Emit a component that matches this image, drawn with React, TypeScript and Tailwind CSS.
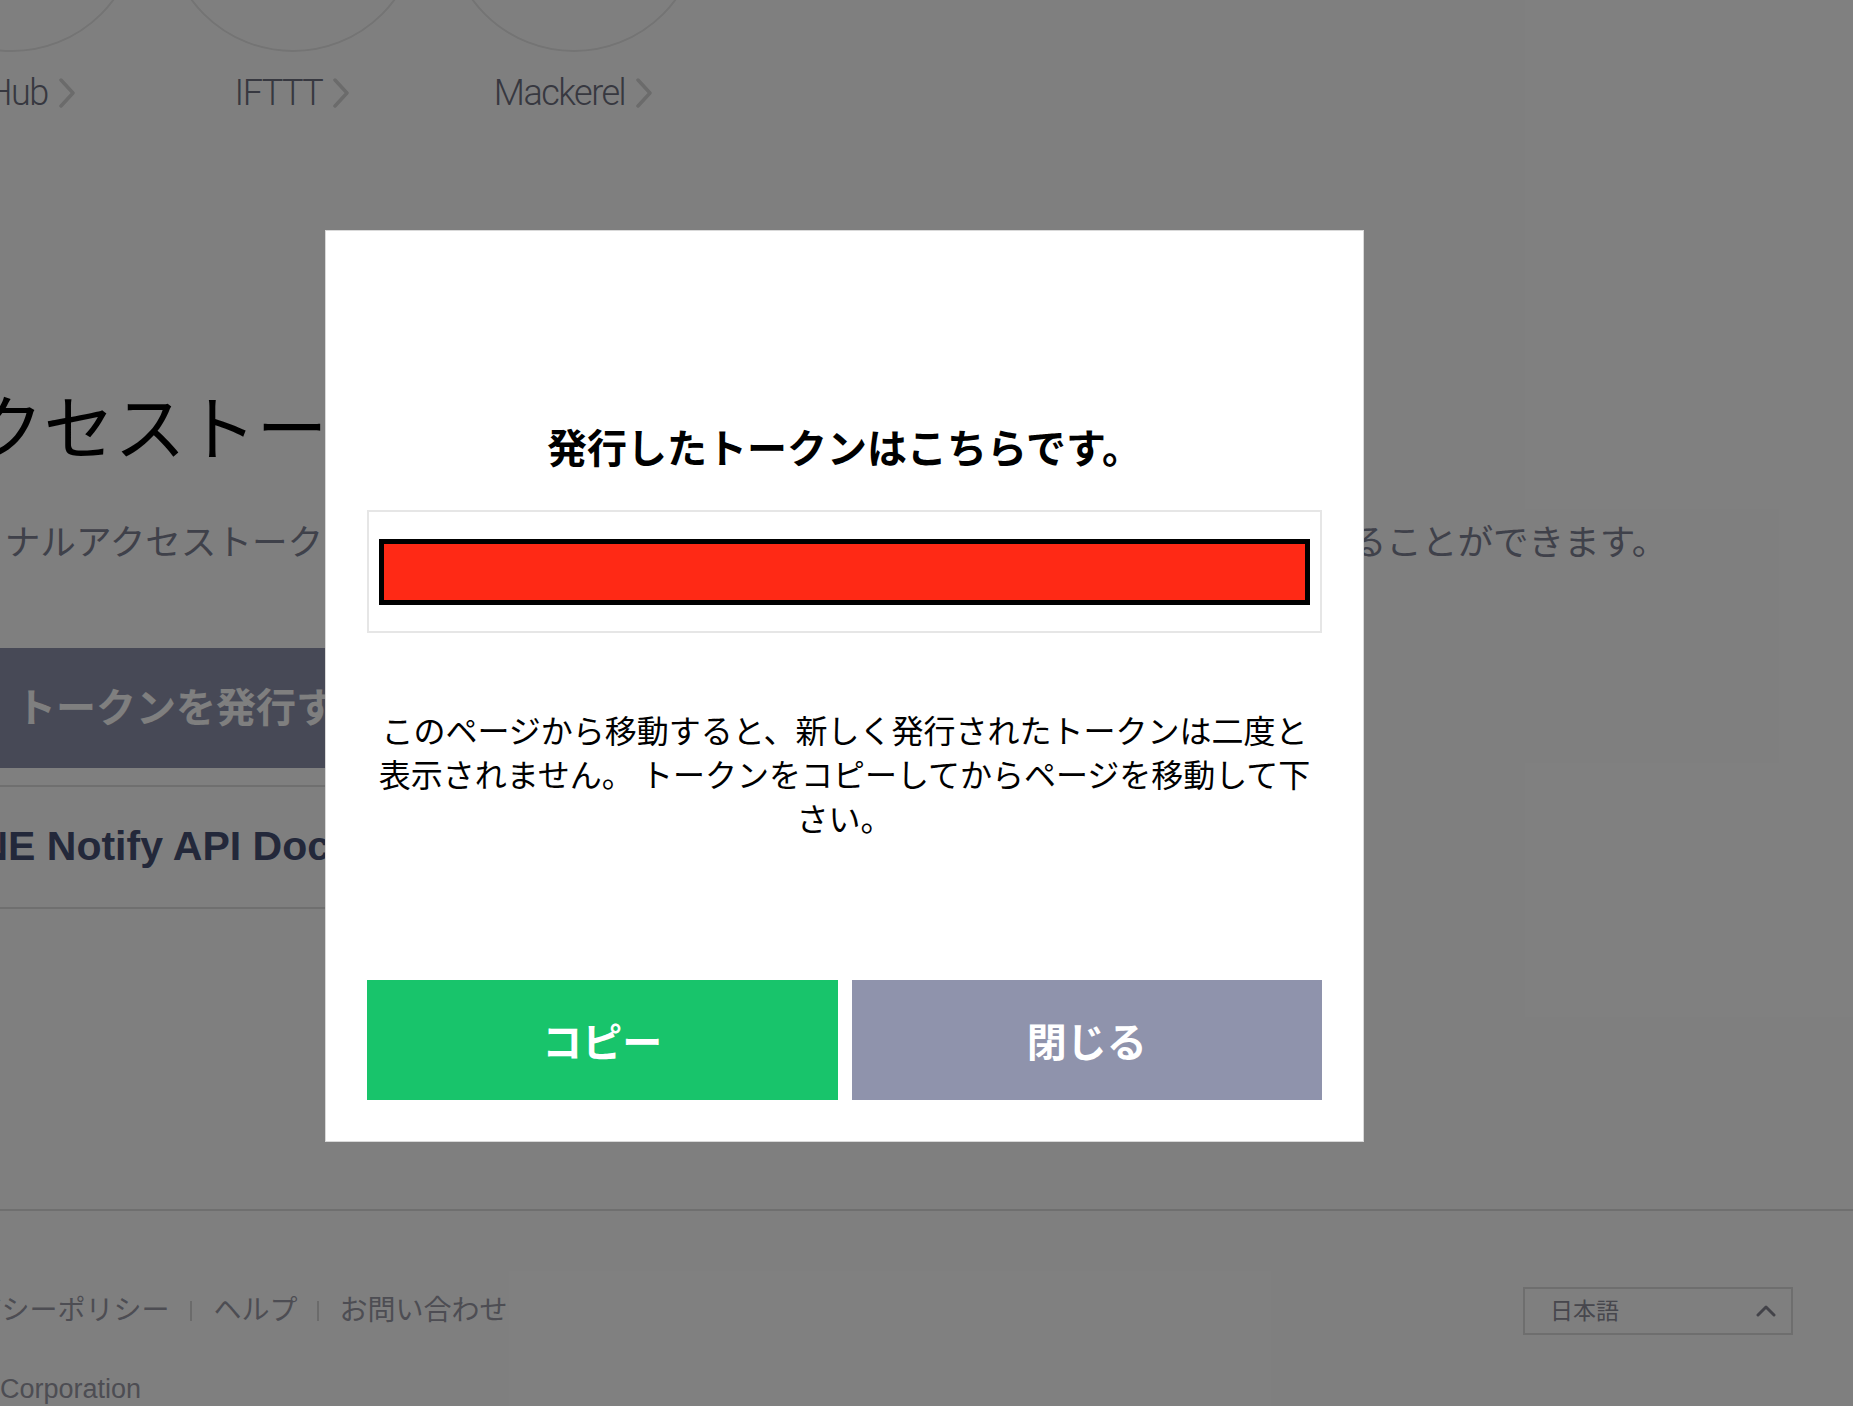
import React from "react";

const services = ["GitHub", "IFTTT", "Mackerel"];

const Chevron = () => (
  <svg width="18" height="30" viewBox="0 0 18 30" fill="none">
    <path
      d="M3 2l12 13L3 28"
      stroke="#d6d6d6"
      strokeWidth="3.5"
      strokeLinecap="round"
      strokeLinejoin="round"
    />
  </svg>
);

const ChevronUp = () => (
  <svg width="20" height="12" viewBox="0 0 20 12" fill="none">
    <path
      d="M2 10l8-8 8 8"
      stroke="#868692"
      strokeWidth="3"
      strokeLinecap="round"
      strokeLinejoin="round"
    />
  </svg>
);

const TokenModal = () => {
  return (
    <div className="absolute left-[325px] top-[230px] z-20 flex w-[1039px] flex-col border border-[#d9d9d9] bg-white px-[41px] pb-[41px] pt-[187px] font-['Noto_Sans_CJK_JP',sans-serif]">
      <h2 className="text-center text-[40px] font-bold leading-[57px] text-black">
        発行したトークンはこちらです。
      </h2>
      <div className="mt-[35px] flex h-[123px] items-center border-2 border-[#e6e6e6] px-[10px]">
        <div className="h-[66px] w-full border-[5px] border-black bg-[#ff2915]" />
      </div>
      <p className="mt-[74px] text-center text-[32px] leading-[44px] text-black">
        このページから移動すると、新しく発行されたトークンは二度と表示されません。
        トークンをコピーしてからページを移動して下さい。
      </p>
      <div className="mt-[141px] flex gap-[14px]">
        <button className="flex h-[120px] flex-1 items-center justify-center bg-[#18c46b] text-[40px] font-bold text-white">
          コピー
        </button>
        <button className="flex h-[120px] flex-1 items-center justify-center bg-[#8f93ac] text-[40px] font-bold text-white">
          閉じる
        </button>
      </div>
    </div>
  );
};

export default function App() {
  return (
    <div className="relative h-[1406px] w-full overflow-hidden bg-white font-['Liberation_Sans','Noto_Sans_CJK_JP',sans-serif]">
      {/* services */}
      <div className="ml-[-129px] flex">
        {services.map((s) => (
          <div key={s} className="flex w-[281px] flex-col items-center">
            <div className="mt-[-202px] h-[254px] w-[254px] rounded-full border-2 border-[#e8e8e8]" />
            <div className="mt-[19px] flex h-[44px] items-center gap-[10px]">
              <span className="font-['Roboto',sans-serif] text-[36px] font-light leading-none tracking-[-1.5px] text-[#6e7080]">
                {s}
              </span>
              <Chevron />
            </div>
          </div>
        ))}
      </div>

      <div className="ml-[-95px]">
        <h1 className="mt-[272px] whitespace-nowrap text-[71px] font-normal leading-[86px] text-black">
          アクセストークンの発行
        </h1>
        <p className="ml-[-7px] mt-[45px] whitespace-nowrap text-[35.6px] leading-[51px] text-[#7e8294]">
          パーソナルアクセストークンを発行すると、連携サービスの設定をしなくても通知を受け取ることができます。
        </p>
        <div className="mt-[79px] w-[1000px]">
          <button className="flex h-[120px] w-[582px] items-center justify-center bg-[#8f93ac] text-[40px] font-bold text-white">
            トークンを発行する
          </button>
          <div className="mt-[17px] h-[2px] bg-[#dedede]" />
          <div className="flex h-[120px] items-center pl-[37px] text-[41px] font-bold text-[#465074]">
            LINE Notify API Document
          </div>
          <div className="h-[2px] bg-[#dedede]" />
        </div>
      </div>

      <footer className="mt-[300px] border-t-2 border-[#dedede] pt-[80px]">
        <div className="flex items-start justify-between pr-[60px]">
          <div className="ml-[-110px] flex h-[40px] items-center text-[28px] text-[#9a9aa6]">
            <span>プライバシーポリシー</span>
            <span className="mx-[21px] h-[20px] w-[2px] bg-[#d6d6d6]" />
            <span>ヘルプ</span>
            <span className="mx-[20px] h-[20px] w-[2px] bg-[#d6d6d6]" />
            <span>お問い合わせ</span>
          </div>
          <div className="mt-[-4px] flex h-[48px] w-[270px] items-center justify-between border-2 border-[#dcdcdc] pl-[25px] pr-[15px] text-[23px] text-[#8e8e9a]">
            <span>日本語</span>
            <ChevronUp />
          </div>
        </div>
        <p className="ml-[-95px] mt-[34px] text-[27px] leading-[40px] text-[#9a9aa6]">
          © LINE Corporation
        </p>
      </footer>

      <div className="absolute inset-0 z-10 bg-black/50" />
      <TokenModal />
    </div>
  );
}
